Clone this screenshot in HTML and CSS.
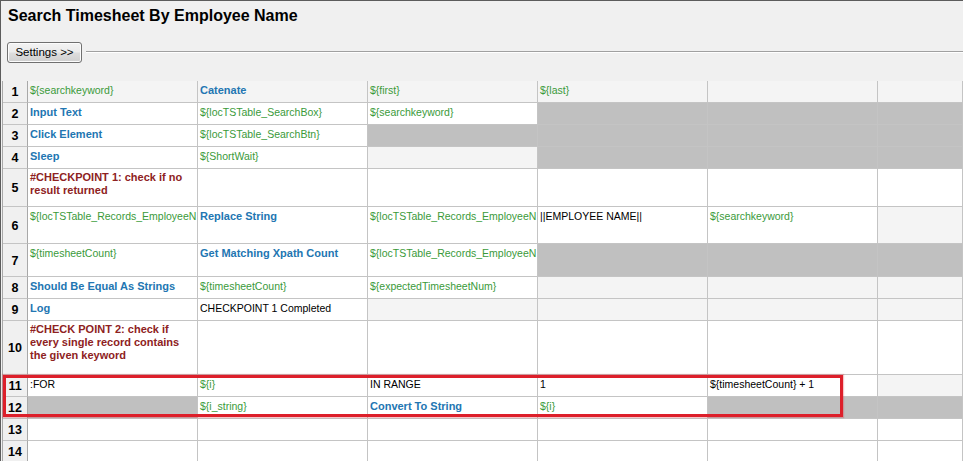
FILE: index.html
```html
<!DOCTYPE html>
<html>
<head>
<meta charset="utf-8">
<link rel="stylesheet" href="styles.css">
</head>
<body>
<div class="window">
  <h1 class="title">Search Timesheet By Employee Name</h1>
  <div class="toolbar">
    <button class="settings">Settings &gt;&gt;</button>
    <div class="sep"></div>
  </div>
  <div class="grid">
    <div class="rh r22">1</div><div class="c lt v">${searchkeyword}</div><div class="c lt k">Catenate</div><div class="c lt v">${first}</div><div class="c lt v">${last}</div><div class="c lt"></div><div class="c lt"></div>
    <div class="rh r22">2</div><div class="c k">Input Text</div><div class="c v">${locTSTable_SearchBox}</div><div class="c v">${searchkeyword}</div><div class="c dk"></div><div class="c dk"></div><div class="c dk"></div>
    <div class="rh r22">3</div><div class="c k">Click Element</div><div class="c v">${locTSTable_SearchBtn}</div><div class="c dk"></div><div class="c dk"></div><div class="c dk"></div><div class="c dk"></div>
    <div class="rh r22">4</div><div class="c k">Sleep</div><div class="c v">${ShortWait}</div><div class="c lt"></div><div class="c dk"></div><div class="c dk"></div><div class="c dk"></div>
    <div class="rh r38">5</div><div class="c cm">#CHECKPOINT 1: check if no<br>result returned</div><div class="c"></div><div class="c"></div><div class="c"></div><div class="c"></div><div class="c"></div>
    <div class="rh r37">6</div><div class="c v">${locTSTable_Records_EmployeeN</div><div class="c k">Replace String</div><div class="c v">${locTSTable_Records_EmployeeN</div><div class="c p">||EMPLOYEE NAME||</div><div class="c v">${searchkeyword}</div><div class="c lt"></div>
    <div class="rh r33">7</div><div class="c v">${timesheetCount}</div><div class="c k">Get Matching Xpath Count</div><div class="c v">${locTSTable_Records_EmployeeN</div><div class="c dk"></div><div class="c dk"></div><div class="c dk"></div>
    <div class="rh r22">8</div><div class="c k">Should Be Equal As Strings</div><div class="c v">${timesheetCount}</div><div class="c v">${expectedTimesheetNum}</div><div class="c lt"></div><div class="c lt"></div><div class="c lt"></div>
    <div class="rh r22">9</div><div class="c k">Log</div><div class="c p">CHECKPOINT 1 Completed</div><div class="c lt"></div><div class="c lt"></div><div class="c lt"></div><div class="c lt"></div>
    <div class="rh r54">10</div><div class="c cm">#CHECK POINT 2: check if<br>every single record contains<br>the given keyword</div><div class="c"></div><div class="c"></div><div class="c"></div><div class="c"></div><div class="c"></div>
    <div class="rh r22">11</div><div class="c p">:FOR</div><div class="c v">${i}</div><div class="c p">IN RANGE</div><div class="c p">1</div><div class="c p">${timesheetCount} + 1</div><div class="c lt"></div>
    <div class="rh r22">12</div><div class="c dk"></div><div class="c v">${i_string}</div><div class="c k">Convert To String</div><div class="c v">${i}</div><div class="c dk"></div><div class="c dk"></div>
    <div class="rh r22">13</div><div class="c"></div><div class="c"></div><div class="c"></div><div class="c"></div><div class="c"></div><div class="c"></div>
    <div class="rh r22">14</div><div class="c"></div><div class="c"></div><div class="c"></div><div class="c"></div><div class="c"></div><div class="c"></div>
    <div class="frame"></div>
  </div>
</div>
</body>
</html>
```
FILE: styles.css
```css
html, body {
  margin: 0;
  padding: 0;
  background: #f0f0f0;
}
.window {
  position: relative;
  box-sizing: border-box;
  width: 963px;
  height: 461px;
  overflow: hidden;
  background: #f0f0f0;
  border-top: 1px solid #5c5c5c;
  border-left: 1px solid #5c5c5c;
  font-family: "Liberation Sans", Arial, sans-serif;
}
.title {
  margin: 0;
  padding: 6px 0 0 7px;
  font: bold 16px/18px "Liberation Sans", Arial, sans-serif;
  color: #000;
}
.toolbar {
  display: flex;
  align-items: flex-start;
  margin-top: 17px;
  padding-left: 6px;
  height: 21px;
}
.settings {
  box-sizing: border-box;
  height: 21px;
  width: 75px;
  padding: 0 0 1px 0;
  border: 1px solid #707070;
  border-radius: 3px;
  background: linear-gradient(#f3f3f3 0%, #ebebeb 48%, #dddddd 52%, #cfcfcf 100%);
  font: 11.5px "Liberation Sans", Arial, sans-serif;
  color: #000;
  box-shadow: inset 0 0 0 1px #fcfcfc;
}
.sep {
  flex: 1;
  margin-left: 4px;
  margin-top: 9px;
  height: 1px;
  background: #a0a0a0;
  border-bottom: 1px solid #ffffff;
}
.grid {
  position: relative;
  margin-top: 18px;
  margin-left: 1px;
  border-left: 1px solid #a8a8a8;
  display: grid;
  grid-template-columns: 25px repeat(5, 170px) 1fr;
  grid-auto-rows: auto;
}
.rh {
  box-sizing: border-box;
  background: #f0f0f0;
  border-right: 1px solid #a8a8a8;
  border-bottom: 1px solid #c4c4c4;
  display: flex;
  align-items: center;
  justify-content: center;
  font: bold 12.5px "Liberation Sans", Arial, sans-serif;
  color: #000;
  padding-top: 1px;
}
.r22 { height: 22px; }
.r33 { height: 33px; }
.r37 { height: 37px; }
.r38 { height: 38px; }
.r54 { height: 54px; }
.c {
  box-sizing: border-box;
  background: #ffffff;
  border-right: 1px solid #c4c4c4;
  border-bottom: 1px solid #c4c4c4;
  padding: 2px 0 0 2px;
  overflow: hidden;
  white-space: nowrap;
  font-size: 10.5px;
  line-height: 14px;
  color: #000;
}
.lt { background: #f4f4f4; }
.dk { background: #c0c0c0; }
.v { color: #3a9a3a; }
.p { color: #000; }
.k {
  color: #2276b2;
  font-weight: bold;
  font-size: 11px;
}
.cm {
  color: #8e2222;
  font-weight: bold;
  font-size: 11px;
  line-height: 13px;
}
.frame {
  position: absolute;
  left: 0;
  top: 294px;
  width: 840px;
  height: 42px;
  box-sizing: border-box;
  border: 3px solid #dd1f2a;
  box-shadow: 0 0 1px 1px rgba(221, 31, 42, 0.25);
  pointer-events: none;
}
```
